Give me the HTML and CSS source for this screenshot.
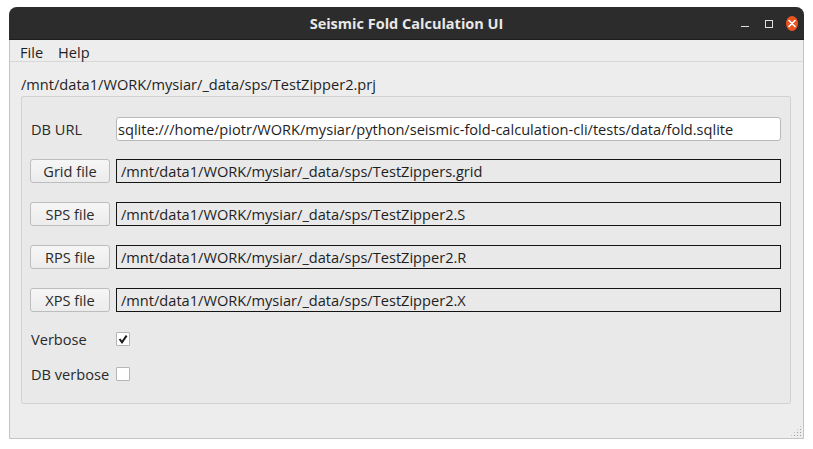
FILE: index.html
```html
<!DOCTYPE html>
<html>
<head>
<meta charset="utf-8">
<link rel="stylesheet" href="styles.css">
</head>
<body>
<div class="window">
  <div class="titlebar">
    <span class="title">Seismic Fold Calculation UI</span>
    <div class="controls">
      <span class="ctl-min"></span>
      <span class="ctl-max"></span>
      <span class="ctl-close">
        <svg width="12" height="15" viewBox="0 0 12 15"><ellipse cx="6" cy="7.5" rx="6" ry="7.5" fill="#e95420"/><path d="M3 4.5 L9 10.5 M9 4.5 L3 10.5" stroke="#fff" stroke-width="1.6" stroke-linecap="round"/></svg>
      </span>
    </div>
  </div>
  <div class="menubar">
    <span class="menu-item">File</span>
    <span class="menu-item">Help</span>
  </div>
  <div class="central">
    <div class="path-label">/mnt/data1/WORK/mysiar/_data/sps/TestZipper2.prj</div>
    <div class="group">
      <div class="form">
        <span class="label first">DB URL</span>
        <div class="input">sqlite:///home/piotr/WORK/mysiar/python/seismic-fold-calculation-cli/tests/data/fold.sqlite</div>

        <button class="btn">Grid file</button>
        <div class="field">/mnt/data1/WORK/mysiar/_data/sps/TestZippers.grid</div>

        <button class="btn">SPS file</button>
        <div class="field">/mnt/data1/WORK/mysiar/_data/sps/TestZipper2.S</div>

        <button class="btn">RPS file</button>
        <div class="field">/mnt/data1/WORK/mysiar/_data/sps/TestZipper2.R</div>

        <button class="btn">XPS file</button>
        <div class="field">/mnt/data1/WORK/mysiar/_data/sps/TestZipper2.X</div>

        <span class="label small">Verbose</span>
        <div class="check-row"><span class="checkbox"><svg width="12" height="12" viewBox="0 0 12 12"><path d="M2.6 6 L5 9.3 L9.6 2.6" fill="none" stroke="#1a1a1a" stroke-width="2"/></svg></span></div>

        <span class="label small">DB verbose</span>
        <div class="check-row"><span class="checkbox"></span></div>
      </div>
    </div>
    <div class="statusbar">
      <span class="grip"></span>
    </div>
  </div>
</div>
</body>
</html>
```
FILE: styles.css
```css
* { box-sizing: border-box; }
html, body { margin: 0; padding: 0; background: #ffffff; }
body {
  font-family: "Open Sans", "DejaVu Sans", sans-serif;
  font-size: 14.6px;
  color: #333333;
  padding: 7px 0 0 9px;
}
.window {
  width: 795px;
  height: 432px;
  display: flex;
  flex-direction: column;
  background: #ededed;
  border: 1px solid #c4c4c4;
  border-top: none;
  border-radius: 8px 8px 0 0;
}
.titlebar {
  height: 33px;
  background: #2c2c2c;
  border-radius: 8px 8px 0 0;
  margin: 0 -1px;
  display: flex;
  align-items: center;
  justify-content: center;
  position: relative;
  border-bottom: 1px solid #1e1e1e;
}
.title {
  color: #e8e8e8;
  font-weight: 700;
  font-size: 14.5px;
}
.controls {
  position: absolute;
  right: 6px;
  top: 9px;
  display: flex;
  align-items: center;
  height: 15px;
}
.ctl-min {
  width: 8px;
  height: 1px;
  background: #e0e0e0;
  margin-top: 6px;
  margin-right: 16px;
}
.ctl-max {
  width: 8px;
  height: 8px;
  border: 1px solid #e0e0e0;
  margin-right: 13px;
}
.ctl-close { display: flex; }
.menubar {
  height: 22px;
  display: flex;
  align-items: center;
  padding: 2px 0 0 10px;
  gap: 15px;
  border-bottom: 1px solid #d8d8d8;
  color: #1f1f1f;
}
.central {
  flex: 1;
  display: flex;
  flex-direction: column;
  padding: 0 12px 0 11px;
}
.path-label {
  height: 34px;
  display: flex;
  align-items: center;
  padding-top: 10px;
  color: #1f1f1f;
  white-space: nowrap;
}
.group {
  border: 1px solid #d2d2d2;
  background: #e9e9e9;
  border-radius: 2px;
  padding: 20px 9px 21px 8px;
}
.form {
  display: grid;
  grid-template-columns: 86px 1fr;
  row-gap: 19px;
  align-items: center;
}
.label {
  height: 24px;
  display: flex;
  align-items: center;
  padding-left: 1px;
  color: #2a2a2a;
  white-space: nowrap;
}
.label.first { margin-bottom: -1px; }
.label.small { height: 16px; }
.input {
  height: 24px;
  margin-bottom: -1px;
  background: #ffffff;
  border: 1px solid #b9b9b9;
  border-radius: 3px;
  padding: 0 0 0 1px;
  display: flex;
  align-items: center;
  color: #1e1e1e;
  white-space: nowrap;
  overflow: hidden;
}
.btn {
  width: 80px;
  height: 24px;
  font-family: inherit;
  font-size: 14.6px;
  color: #2a2a2a;
  background: linear-gradient(#f6f6f6, #ececec);
  border: 1px solid #bdbdbd;
  border-radius: 3px;
  padding: 0;
  margin: 0;
  white-space: nowrap;
}
.field {
  height: 24px;
  border: 1px solid #141414;
  background: #e9e9e9;
  padding-left: 4px;
  display: flex;
  align-items: center;
  color: #1e1e1e;
  white-space: nowrap;
  overflow: hidden;
}
.check-row {
  height: 16px;
  display: flex;
  align-items: center;
}
.checkbox {
  width: 14px;
  height: 14px;
  background: #ffffff;
  border: 1px solid #b5b5b5;
  border-radius: 1px;
  display: flex;
  align-items: center;
  justify-content: center;
}
.statusbar {
  flex: 1;
  display: flex;
  justify-content: flex-end;
  align-items: flex-end;
  padding-bottom: 1px;
  margin-right: -11px;
}
.grip {
  width: 12px;
  height: 12px;
  background-image: radial-gradient(circle, #9c9c9c 0.8px, transparent 1px);
  background-size: 3px 3px;
  background-position: 0 0;
  clip-path: polygon(100% 0, 100% 100%, 0 100%);
}
```
